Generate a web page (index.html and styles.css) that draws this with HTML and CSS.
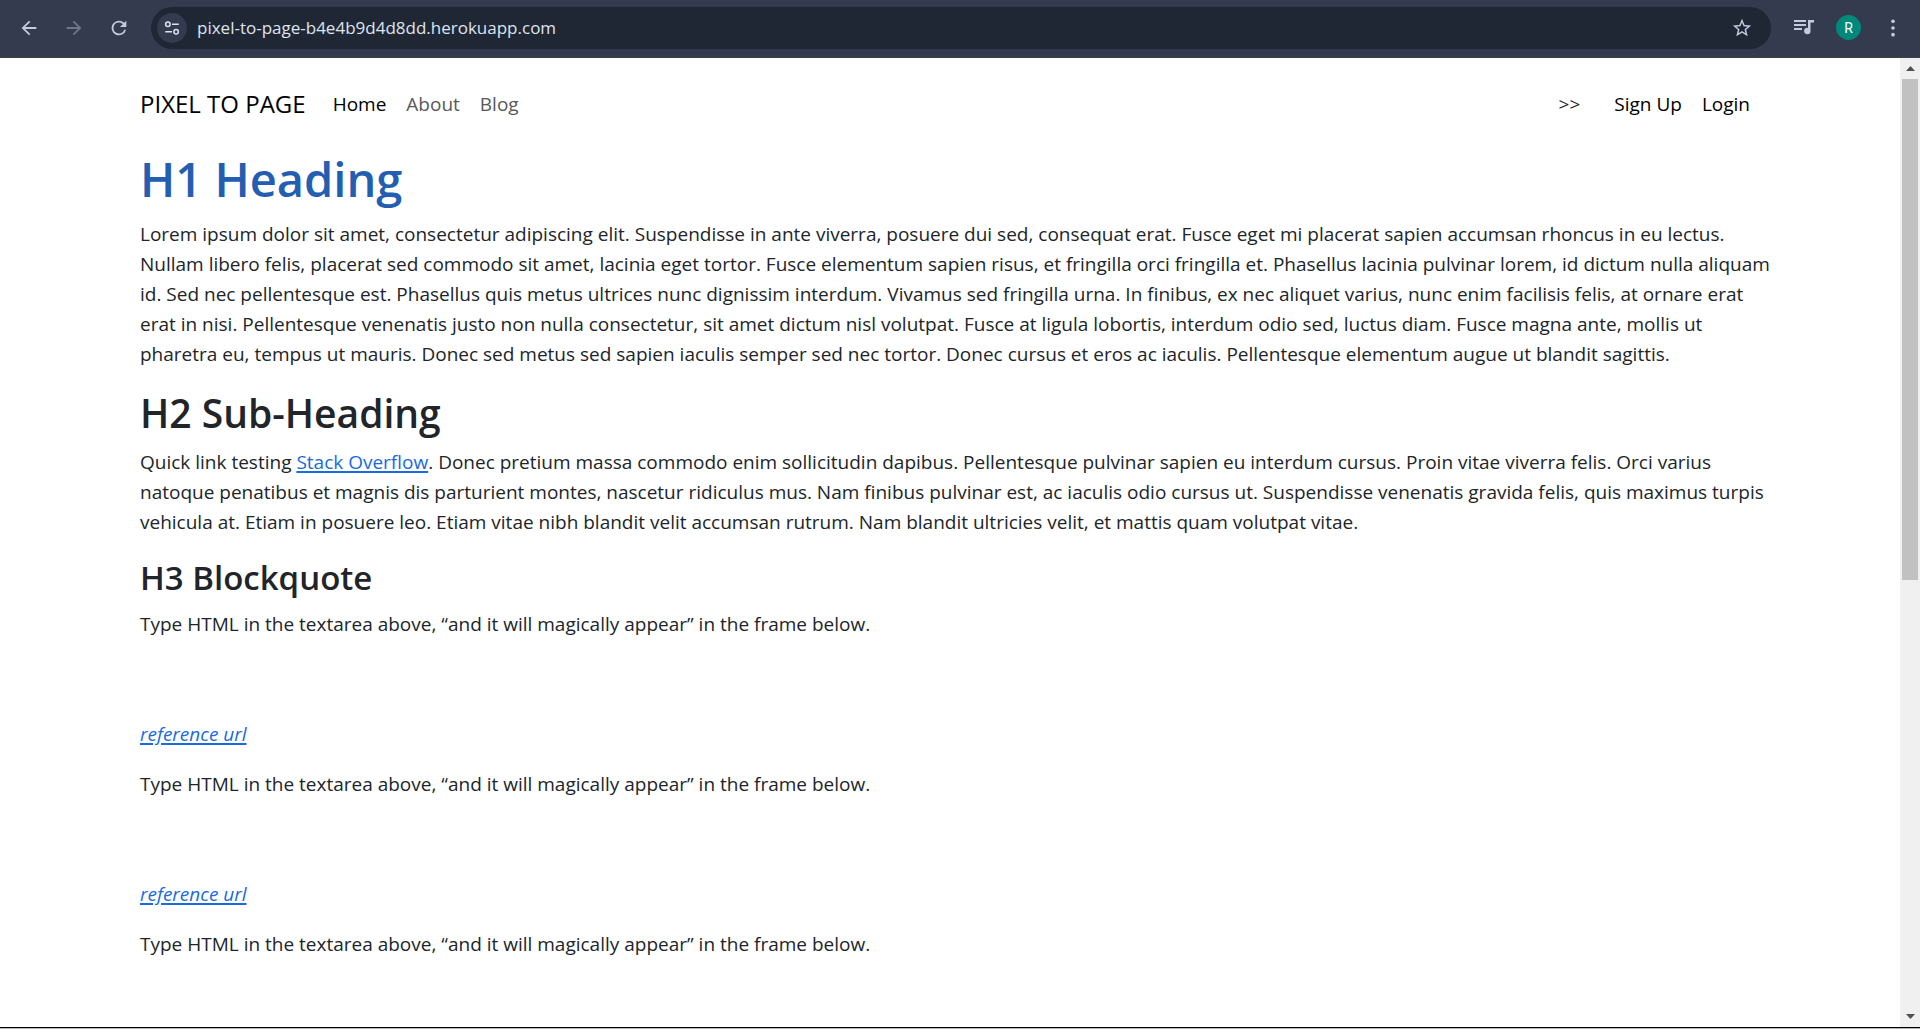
FILE: index.html
```html
<!DOCTYPE html>
<html lang="en">
<head>
<meta charset="utf-8">
<title>Pixel to Page</title>
<link rel="stylesheet" href="styles.css">
</head>
<body>
<div class="toolbar">
  <button class="tool" aria-label="Back"><svg viewBox="0 0 24 24"><path d="M20 11H7.8l5.6-5.6L12 4l-8 8 8 8 1.4-1.4L7.8 13H20z"/></svg></button>
  <button class="tool dim" aria-label="Forward"><svg viewBox="0 0 24 24"><path d="M4 11h12.200l-5.600-5.600L12 4l8 8-8 8-1.400-1.400 5.600-5.600H4z"/></svg></button>
  <button class="tool" aria-label="Reload"><svg viewBox="0 0 24 24"><path d="M17.650 6.350A8 8 0 1 0 19.730 14h-2.080A6 6 0 1 1 12 6c1.660 0 3.140.690 4.220 1.780L13 11h7V4z"/></svg></button>
  <div class="omnibox">
    <button class="site-info" aria-label="Site information"><svg viewBox="0 0 24 24"><circle cx="6.500" cy="7" r="3"/><path d="M12 7h9M3 17h9"/><circle cx="17.500" cy="17" r="3"/></svg></button>
    <input class="address" type="text" aria-label="Address" value="pixel-to-page-b4e4b9d4d8dd.herokuapp.com">
    <button class="star" aria-label="Bookmark"><svg viewBox="0 0 24 24"><path d="M22 9.240l-7.190-.620L12 2 9.190 8.630 2 9.240l5.460 4.730L5.820 21 12 17.270 18.180 21l-1.630-7.030zM12 15.400l-3.760 2.270 1-4.280-3.320-2.880 4.380-.380L12 6.100l1.710 4.040 4.380.380-3.320 2.880 1 4.280z"/></svg></button>
  </div>
  <button class="media" aria-label="Media controls"><svg viewBox="0 0 24 24"><path d="M2 4h12v2H2zM2 8h12v2H2zM2 12h8v2H2zM16 4h6v2.500h-3.500V15a3.200 3.200 0 1 1-2.500-3.100z"/></svg></button>
  <button class="avatar" aria-label="Profile">R</button>
  <button class="kebab" aria-label="Menu"><svg viewBox="0 0 24 24"><circle cx="12" cy="4" r="2.200"/><circle cx="12" cy="12" r="2.200"/><circle cx="12" cy="20" r="2.200"/></svg></button>
</div>
<div class="viewport">
  <div class="page">
    <div class="container">
      <nav class="navbar">
        <a class="brand" href="#">PIXEL TO PAGE</a>
        <a class="nav-link active" href="#">Home</a>
        <a class="nav-link" href="#">About</a>
        <a class="nav-link" href="#">Blog</a>
        <span class="chevrons">&gt;&gt;</span>
        <a class="nav-link active" href="#">Sign Up</a>
        <a class="nav-link active" href="#">Login</a>
      </nav>
      <main>
        <h1>H1 Heading</h1>
        <p>Lorem ipsum dolor sit amet, consectetur adipiscing elit. Suspendisse in ante viverra, posuere dui sed, consequat erat. Fusce eget mi placerat sapien accumsan rhoncus in eu lectus. Nullam libero felis, placerat sed commodo sit amet, lacinia eget tortor. Fusce elementum sapien risus, et fringilla orci fringilla et. Phasellus lacinia pulvinar lorem, id dictum nulla aliquam id. Sed nec pellentesque est. Phasellus quis metus ultrices nunc dignissim interdum. Vivamus sed fringilla urna. In finibus, ex nec aliquet varius, nunc enim facilisis felis, at ornare erat erat in nisi. Pellentesque venenatis justo non nulla consectetur, sit amet dictum nisl volutpat. Fusce at ligula lobortis, interdum odio sed, luctus diam. Fusce magna ante, mollis ut pharetra eu, tempus ut mauris. Donec sed metus sed sapien iaculis semper sed nec tortor. Donec cursus et eros ac iaculis. Pellentesque elementum augue ut blandit sagittis.</p>
        <h2>H2 Sub-Heading</h2>
        <p>Quick link testing <a href="#">Stack Overflow</a>. Donec pretium massa commodo enim sollicitudin dapibus. Pellentesque pulvinar sapien eu interdum cursus. Proin vitae viverra felis. Orci varius natoque penatibus et magnis dis parturient montes, nascetur ridiculus mus. Nam finibus pulvinar est, ac iaculis odio cursus ut. Suspendisse venenatis gravida felis, quis maximus turpis vehicula at. Etiam in posuere leo. Etiam vitae nibh blandit velit accumsan rutrum. Nam blandit ultricies velit, et mattis quam volutpat vitae.</p>
        <h3>H3 Blockquote</h3>
        <blockquote>
          <p>Type HTML in the textarea above, “and it will magically appear” in the frame below.</p>
          <cite><a href="#">reference url</a></cite>
        </blockquote>
        <blockquote>
          <p>Type HTML in the textarea above, “and it will magically appear” in the frame below.</p>
          <cite><a href="#">reference url</a></cite>
        </blockquote>
        <blockquote>
          <p>Type HTML in the textarea above, “and it will magically appear” in the frame below.</p>
        </blockquote>
      </main>
    </div>
  </div>
  <div class="scrollbar">
    <div class="arrow"><svg viewBox="0 0 9 5"><path d="M0 5 4.500 0 9 5z"/></svg></div>
    <div class="track"><div class="thumb"></div></div>
    <div class="arrow"><svg viewBox="0 0 9 5"><path d="M0 0h9L4.500 5z"/></svg></div>
  </div>
</div>
</body>
</html>
```
FILE: styles.css
```css
* { box-sizing: border-box; }
body {
  margin: 0;
  height: 100vh;
  display: flex;
  flex-direction: column;
  overflow: hidden;
  background: #fff;
  color: #212529;
  font: 19px/30px "Open Sans", "Noto Sans", sans-serif;
  border-bottom: 1px solid #b4b4b4;
}
button { border: 0; padding: 0; background: none; color: inherit; display: flex; align-items: center; justify-content: center; }
svg { display: block; fill: currentColor; }
a { color: #1a6ae0; text-decoration-thickness: 2px; text-underline-offset: 2px; }

.toolbar {
  flex: none;
  display: flex;
  align-items: center;
  height: 58px;
  padding: 0 15px 2px 6px;
  background: #343b4e;
  border-bottom: 1px solid #3d4049;
  color: #c3cbe0;
}
.tool { width: 45px; height: 42px; }
.tool svg { width: 22px; height: 22px; }
.dim { color: #70778a; }
.omnibox {
  flex: 1;
  display: flex;
  align-items: center;
  height: 42px;
  margin: 0 21px 0 10px;
  padding: 0 18px 0 6px;
  border-radius: 21px;
  background: #1f2735;
}
.site-info { width: 30px; height: 30px; border-radius: 50%; background: #343b4e; color: #dde2f0; }
.site-info svg { width: 18px; height: 18px; fill: none; stroke: currentColor; stroke-width: 2; }
.address {
  flex: 1;
  min-width: 0;
  border: 0;
  padding: 0 0 0 10px;
  background: none;
  color: #dfe4ee;
  font: 17px/24px "Open Sans", "Noto Sans", sans-serif;
}
.star svg { width: 22px; height: 22px; }
.media svg { width: 24px; height: 24px; }
.avatar {
  width: 25px;
  height: 25px;
  margin: 0 20px;
  border-radius: 50%;
  background: #00897b;
  color: #fff;
  font: 14px/16px Roboto, sans-serif;
}
.kebab svg { width: 24px; height: 20px; }

.viewport { flex: 1; min-height: 0; display: flex; border-bottom: 1px solid #000; }
.page { flex: 1; min-width: 0; overflow: hidden; }
.container { max-width: 1650px; margin: 0 auto; padding: 0 5px 0 15px; }
.navbar { display: flex; align-items: center; gap: 20px; padding: 27px 20px 26px 0; line-height: 38px; }
.brand { margin-right: 7px; color: #000; font-size: 24px; text-decoration: none; }
.nav-link { color: #595959; text-decoration: none; }
.active { color: #000; }
.chevrons { margin: 0 14px 0 auto; }
h1, h2, h3, p, blockquote { margin: 0; }
h1, h2, h3 { font-weight: 600; margin-bottom: 10px; }
h1 { color: #245eb0; font-size: 47px; line-height: 60px; }
h2 { font-size: 39px; line-height: 48px; }
h3 { font-size: 33px; line-height: 42px; }
p { margin-bottom: 20px; }
blockquote { margin-bottom: 20px; }
blockquote p { margin-bottom: 80px; }
cite { display: block; }

.scrollbar { flex: none; display: flex; flex-direction: column; width: 20px; padding: 0 2px; background: #f0f0f0; }
.arrow { display: flex; align-items: center; justify-content: center; height: 21px; color: #505050; }
.arrow svg { width: 9px; height: 5px; }
.track { flex: 1; }
.thumb { height: 54%; background: #c1c1c1; }
```
